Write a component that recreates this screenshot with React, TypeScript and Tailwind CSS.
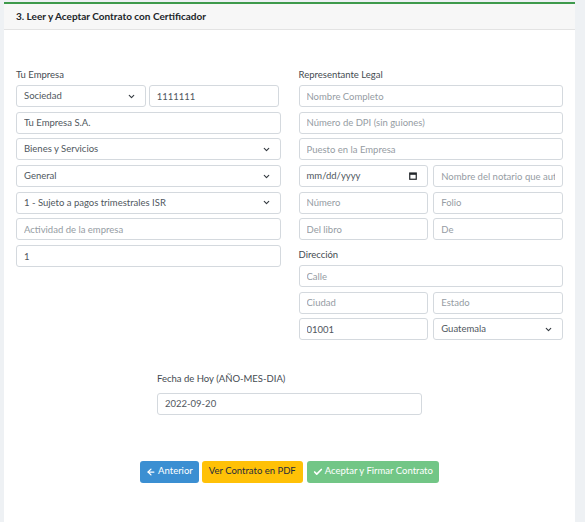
import { ArrowLeft, Check, ChevronDown } from 'lucide-react';

const field =
    'h-[22px] w-full min-w-0 rounded-[3px] border border-[#d4d9de] bg-white px-[7px] text-[9.5px] text-[#50575e] placeholder:text-[#959ca3] outline-none';

function Input({ value, placeholder }: { value?: string; placeholder?: string }) {
    return <input type="text" defaultValue={value} placeholder={placeholder} className={field} />;
}

function Select({ value }: { value: string }) {
    return (
        <div className={`${field} flex items-center justify-between`}>
            <span>{value}</span>
            <ChevronDown size={9} strokeWidth={3} className="text-[#343a40] mr-[2px]" />
        </div>
    );
}

function DateField() {
    return (
        <div className={`${field} flex items-center justify-between`}>
            <span>mm/dd/yyyy</span>
            <svg width="8" height="8" viewBox="0 0 8 8" className="mr-[3px]">
                <rect x="0.75" y="1" width="6.5" height="6.25" fill="none" stroke="#212529" strokeWidth="1.2" />
                <rect x="0.75" y="1" width="6.5" height="1.8" fill="#212529" />
            </svg>
        </div>
    );
}

function Label({ children }: { children: string }) {
    return <div className="text-[9.5px] text-[#454b51] leading-[14px] mb-[3px]">{children}</div>;
}

export default function App() {
    return (
        <div className="w-[585px] h-[522px] bg-[#eef1f4] pt-[2px] px-[4px] pr-[10px] overflow-hidden" style={{ fontFamily: 'Lato, "Noto Sans", sans-serif' }}>
            <div className="h-full bg-white border-t-[2px] border-[#3e9a4c] flex flex-col">
                <div className="h-[26px] bg-[#f7f7f7] border-b border-[#e3e3e3] flex items-center px-[12px]">
                    <h3 className="text-[10px] font-bold text-[#212529]">3. Leer y Aceptar Contrato con Certificador</h3>
                </div>

                <div className="px-[12px] pt-[38px]">
                    <div className="flex gap-[18px]">
                        <div className="flex-1 flex flex-col">
                            <Label>Tu Empresa</Label>
                            <div className="flex flex-col gap-[4.7px]">
                                <div className="flex gap-[3px] pr-[2px]">
                                    <Select value="Sociedad" />
                                    <Input value="1111111" />
                                </div>
                                <Input value="Tu Empresa S.A." />
                                <Select value="Bienes y Servicios" />
                                <Select value="General" />
                                <Select value="1 - Sujeto a pagos trimestrales ISR" />
                                <Input placeholder="Actividad de la empresa" />
                                <Input value="1" />
                            </div>
                        </div>

                        <div className="flex-1 flex flex-col">
                            <Label>Representante Legal</Label>
                            <div className="flex flex-col gap-[4.7px]">
                                <Input placeholder="Nombre Completo" />
                                <Input placeholder="Número de DPI (sin guiones)" />
                                <Input placeholder="Puesto en la Empresa" />
                                <div className="flex gap-[5px]">
                                    <DateField />
                                    <Input placeholder="Nombre del notario que autorizó" />
                                </div>
                                <div className="flex gap-[5px]">
                                    <Input placeholder="Número" />
                                    <Input placeholder="Folio" />
                                </div>
                                <div className="flex gap-[5px]">
                                    <Input placeholder="Del libro" />
                                    <Input placeholder="De" />
                                </div>
                            </div>
                            <div className="mt-[8px]">
                                <Label>Dirección</Label>
                            </div>
                            <div className="flex flex-col gap-[4.3px]">
                                <Input placeholder="Calle" />
                                <div className="flex gap-[5px]">
                                    <Input placeholder="Ciudad" />
                                    <Input placeholder="Estado" />
                                </div>
                                <div className="flex gap-[5px]">
                                    <Input value="01001" />
                                    <Select value="Guatemala" />
                                </div>
                            </div>
                        </div>
                    </div>

                    <div className="w-[265px] mx-auto mt-[32px]">
                        <Label>Fecha de Hoy (AÑO-MES-DIA)</Label>
                        <Input value="2022-09-20" />
                    </div>

                    <div className="flex justify-center gap-[3px] mt-[46px]">
                        <button className="h-[22px] px-[6px] rounded-[3px] bg-[#3b8fd2] text-white text-[9.5px] flex items-center gap-[2px]">
                            <ArrowLeft size={10} strokeWidth={3} />
                            Anterior
                        </button>
                        <button className="h-[22px] px-[7px] rounded-[3px] bg-[#ffc107] text-[#1f2d3d] text-[9.5px]">
                            Ver Contrato en PDF
                        </button>
                        <button className="h-[22px] px-[6px] rounded-[3px] bg-[#72c686] text-white text-[9.5px] flex items-center gap-[2px] ml-[1px]">
                            <Check size={10} strokeWidth={4} />
                            Aceptar y Firmar Contrato
                        </button>
                    </div>
                </div>
            </div>
        </div>
    );
}
